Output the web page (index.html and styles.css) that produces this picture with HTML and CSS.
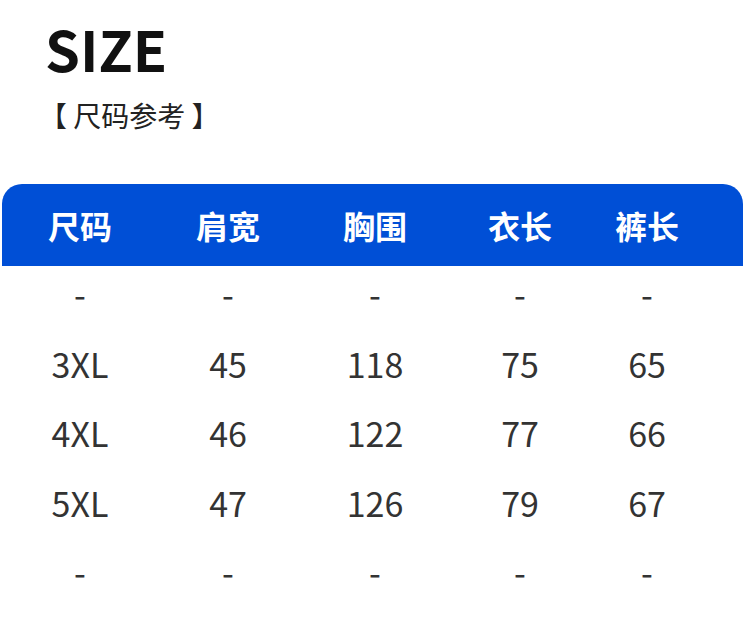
FILE: index.html
```html
<!DOCTYPE html>
<html lang="zh">
<head>
<meta charset="utf-8">
<link rel="stylesheet" href="styles.css">
</head>
<body>
<div class="page">
  <header class="intro">
    <h1 class="title">SIZE</h1>
    <p class="subtitle">【 尺码参考 】</p>
  </header>
  <section class="table">
    <div class="row head">
      <span>尺码</span><span>肩宽</span><span>胸围</span><span>衣长</span><span>裤长</span>
    </div>
    <div class="body">
      <div class="row"><span>-</span><span>-</span><span>-</span><span>-</span><span>-</span></div>
      <div class="row"><span>3XL</span><span>45</span><span>118</span><span>75</span><span>65</span></div>
      <div class="row"><span>4XL</span><span>46</span><span>122</span><span>77</span><span>66</span></div>
      <div class="row"><span>5XL</span><span>47</span><span>126</span><span>79</span><span>67</span></div>
      <div class="row"><span>-</span><span>-</span><span>-</span><span>-</span><span>-</span></div>
    </div>
  </section>
</div>
</body>
</html>
```

FILE: styles.css
```css
* { box-sizing: border-box; }
html, body { margin: 0; padding: 0; background: #fff; }
body {
  width: 750px;
  height: 631px;
  overflow: hidden;
  font-family: "Noto Sans CJK SC", "Noto Sans", sans-serif;
  color: #333;
}
.intro {
  padding: 18px 0 0 45px;
}
.title {
  margin: 0;
  font-size: 56px;
  line-height: 60px;
  font-weight: 700;
  color: #111;
}
.subtitle {
  margin: 19px 0 0 -6px;
  font-size: 28px;
  line-height: 36px;
  color: #222;
}
.table {
  margin-top: 51px;
}
.row {
  display: grid;
  grid-template-columns: 148px 148px 146px 144px 110px;
  padding-left: 6px;
  align-items: center;
  text-align: center;
}
.head {
  margin: 0 7px 0 2px;
  padding-left: 4px;
  height: 82px;
  background: #004fd6;
  border-radius: 20px 20px 0 0;
  color: #fff;
  font-size: 32px;
  font-weight: 700;
}
.body {
  margin-top: -7px;
}
.body .row {
  height: 69.5px;
  font-size: 34px;
  color: #333;
}
```
